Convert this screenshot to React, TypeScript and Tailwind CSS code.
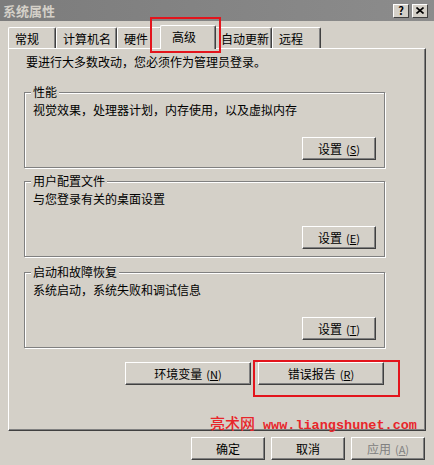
import React from "react";

const font = { fontFamily: '"Noto Sans CJK SC", "Liberation Sans", sans-serif' };

const Btn = ({
  label,
  k,
  w = "w-[74px]",
  disabled = false,
}: {
  label: string;
  k?: string;
  w?: string;
  disabled?: boolean;
}) => (
  <div
    className={`${w} h-[23px] flex items-center justify-center border border-t-white border-l-white border-b-[#404040] border-r-[#404040] shadow-[inset_-1px_-1px_0_#808080] text-[12px] leading-[14px] ${
      disabled ? "text-[#808080]" : "text-black"
    }`}
  >
    <span>{label}</span>
    {k && (
      <span className="ml-[4px] text-[11px]">
        (<span className="underline">{k}</span>)
      </span>
    )}
  </div>
);

const Group = ({
  title,
  desc,
  k,
  mt,
}: {
  title: string;
  desc: string;
  k: string;
  mt: string;
}) => (
  <div
    className={`relative ${mt} w-[361px] border border-[#808080] shadow-[inset_1px_1px_0_#fff,1px_1px_0_#fff] pt-[10px] pb-[7px] pl-[8px] pr-[8px]`}
  >
    <div className="absolute -top-[8px] left-[6px] bg-[#d4d0c8] px-[2px] text-[12px] leading-[14px]">
      {title}
    </div>
    <div className="text-[12px] leading-[14px]">{desc}</div>
    <div className="flex justify-end mt-[20px]">
      <Btn label="设置" k={k} />
    </div>
  </div>
);

const tabs = [
  { t: "常规", w: "w-[48px]" },
  { t: "计算机名", w: "w-[61px]" },
  { t: "硬件", w: "w-[45px]" },
  { t: "高级", w: "w-[56px]", sel: true },
  { t: "自动更新", w: "w-[58px]" },
  { t: "远程", w: "w-[49px]" },
];

export default function App() {
  return (
    <div
      className="relative w-[434px] h-[465px] bg-[#d4d0c8] overflow-hidden text-black"
      style={font}
    >
      {/* title bar */}
      <div className="h-[21px] flex items-center bg-gradient-to-r from-[#7c7c7c] to-[#8c8c8c] pl-[3px] pr-[6px]">
        <span className="text-[13px] font-bold text-[#d4d0c8] leading-[15px]">系统属性</span>
        <div className="ml-auto flex gap-[3px]">
          <div className="w-[16px] h-[14px] bg-[#d4d0c8] border border-t-white border-l-white border-b-[#404040] border-r-[#404040] flex items-center justify-center text-[11px] font-bold leading-none">
            ?
          </div>
          <div className="w-[16px] h-[14px] bg-[#d4d0c8] border border-t-white border-l-white border-b-[#404040] border-r-[#404040] flex items-center justify-center">
            <svg width="8" height="7" viewBox="0 0 8 7">
              <path d="M0.5 0.5 L7.5 6.5 M7.5 0.5 L0.5 6.5" stroke="#000" strokeWidth="1.6" />
            </svg>
          </div>
        </div>
      </div>

      {/* tabs */}
      <div className="h-[27px] flex items-end pl-[8px]">
        {tabs.map((tab) =>
          tab.sel ? (
            <div
              key={tab.t}
              className={`${tab.w} -mx-[2px] h-[24px] -mb-[1px] relative z-10 bg-[#d4d0c8] border-t border-l border-t-white border-l-white border-r border-r-[#404040] shadow-[inset_-1px_0_0_#808080] rounded-t-[2px] pl-[11px] pt-[4px] text-[12px] leading-[14px]`}
            >
              {tab.t}
            </div>
          ) : (
            <div
              key={tab.t}
              className={`${tab.w} h-[21px] border-t border-l border-t-white border-l-white border-r border-r-[#404040] shadow-[inset_-1px_0_0_#808080] rounded-t-[2px] pl-[6px] pt-[4px] text-[12px] leading-[14px]`}
            >
              {tab.t}
            </div>
          )
        )}
      </div>

      {/* panel */}
      <div className="mx-[8px] h-[383px] border border-t-white border-l-white border-b-[#404040] border-r-[#404040] shadow-[inset_-1px_-1px_0_#808080] pl-[15px] pt-[6px]">
        <div className="ml-[2px] text-[12px] leading-[14px]">要进行大多数改动，您必须作为管理员登录。</div>
        <Group mt="mt-[23px]" title="性能" desc="视觉效果，处理器计划，内存使用，以及虚拟内存" k="S" />
        <Group mt="mt-[13px]" title="用户配置文件" desc="与您登录有关的桌面设置" k="E" />
        <Group mt="mt-[15px]" title="启动和故障恢复" desc="系统启动，系统失败和调试信息" k="T" />
        <div className="w-[361px] flex justify-end gap-[7px] mt-[14px] pr-[1px]">
          <Btn label="环境变量" k="N" w="w-[126px]" />
          <Btn label="错误报告" k="R" w="w-[126px]" />
        </div>
      </div>

      {/* dialog buttons */}
      <div className="flex justify-end gap-[6px] pr-[9px] mt-[6px]">
        <Btn label="确定" />
        <Btn label="取消" />
        <Btn label="应用" k="A" disabled />
      </div>

      {/* annotations */}
      <div className="absolute left-[150px] top-[17px] w-[71px] h-[36px] border-2 border-[#e3141c] z-20" />
      <div className="absolute left-[253px] top-[360px] w-[147px] h-[37px] border-2 border-[#e3141c] z-20" />
      <div className="absolute left-[210px] top-[414px] flex items-baseline text-[#e8262b]">
        <span className="text-[15px] leading-[18px] font-medium">亮术网</span>
        <span
          className="ml-[8px] text-[13.5px] leading-[18px] font-bold"
          style={{ fontFamily: '"Liberation Mono", monospace' }}
        >
          www.liangshunet.com
        </span>
      </div>
    </div>
  );
}
